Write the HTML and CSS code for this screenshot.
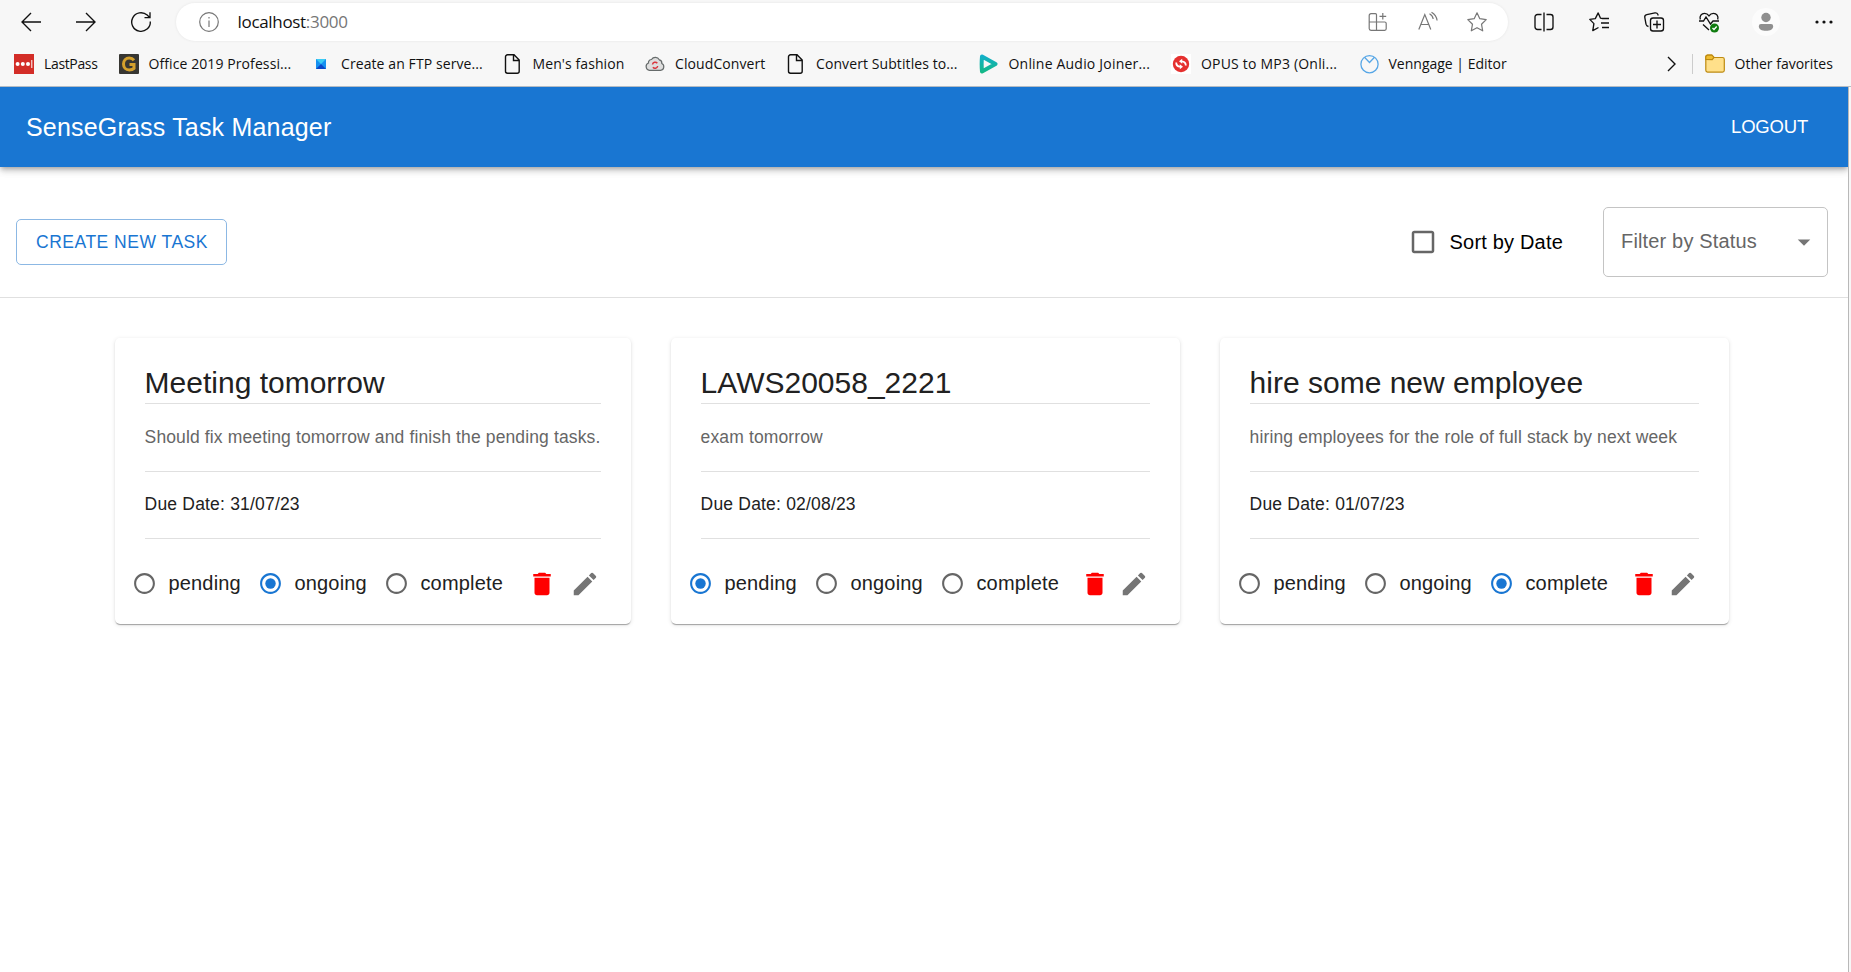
FILE: index.html
```html
<!DOCTYPE html>
<html lang="en">
<head>
<meta charset="utf-8">
<title>SenseGrass Task Manager</title>
<link rel="stylesheet" href="styles.css">
</head>
<body>
<svg class="defs" width="0" height="0">
  <defs>
    <symbol id="radio-off" viewBox="0 0 24 24"><path d="M12 2C6.48 2 2 6.48 2 12s4.48 10 10 10 10-4.480 10-10S17.520 2 12 2zm0 18c-4.420 0-8-3.580-8-8s3.580-8 8-8 8 3.580 8 8-3.580 8-8 8z"/></symbol>
    <symbol id="radio-on" viewBox="0 0 24 24"><path d="M12 2C6.480 2 2 6.480 2 12s4.480 10 10 10 10-4.480 10-10S17.520 2 12 2zm0 18c-4.420 0-8-3.580-8-8s3.580-8 8-8 8 3.580 8 8-3.580 8-8 8z"/><circle cx="12" cy="12" r="5"/></symbol>
    <symbol id="trash" viewBox="0 0 24 24"><path d="M6 19c0 1.100.9 2 2 2h8c1.100 0 2-.9 2-2V7H6v12zM19 4h-3.500l-1-1h-5l-1 1H5v2h14V4z"/></symbol>
    <symbol id="pencil" viewBox="0 0 24 24"><path d="M3 17.250V21h3.750L17.810 9.940l-3.750-3.750L3 17.250zM20.710 7.040c.39-.39.39-1.020 0-1.410l-2.340-2.340a.9959.9959 0 0 0-1.410 0l-1.830 1.830 3.750 3.750 1.830-1.830z"/></symbol>
    <symbol id="page" viewBox="0 0 20 20"><path d="M4.500 .8H11l5.200 5.200v11.200a2 2 0 0 1-2 2H4.500a2 2 0 0 1-2-2V2.800a2 2 0 0 1 2-2zM10.500 1v5.500h5.500" fill="none" stroke="#111" stroke-width="1.400"/></symbol>
  </defs>
</svg>

<header class="browser">
  <div class="toolbar">
    <svg class="tool back" viewBox="0 0 20 20"><path d="M20 10H1M10 1 1 10l9 9"/></svg>
    <svg class="tool forward" viewBox="0 0 20 20"><path d="M0 10h19M10 1l9 9-9 9"/></svg>
    <svg class="tool reload" viewBox="0 0 20 20"><path d="M19.300 9.500A9.300 9.300 0 1 1 16.200 3.100L18.600 5.400M19 .3v5.300h-5.500"/></svg>
    <div class="address">
      <svg class="tool muted" viewBox="0 0 20 20"><circle cx="10" cy="10" r="9.300"/><path d="M10 8.500V15M10 5v1.500"/></svg>
      <span class="url">localhost<span class="port">:3000</span></span>
      <svg class="tool muted apps" viewBox="0 0 20 20"><path d="M3 1.700h4.500a1 1 0 0 1 1 1v15.600H3a1.800 1.800 0 0 1-1.800-1.800V3.500A1.800 1.800 0 0 1 3 1.700zM1.200 10h15.500a1.500 1.500 0 0 1 1.500 1.500v5.300a1.500 1.500 0 0 1-1.500 1.500H8.500M14.800 1v6.500M11.500 4.300h6.700"/></svg>
      <svg class="tool muted read" viewBox="0 0 20 20"><path d="M.8 17.500 6.800 2.500l6 15M3 12.500h7.800M11.500 1.800c2 1 3.300 2.800 3.700 5.200M13.500.3c3 1.600 5 4.200 5.600 8.200"/></svg>
      <svg class="tool muted star" viewBox="0 0 20 20"><path stroke-linejoin="round" d="M10 .8l2.800 5.900 6.400.9-4.700 4.600 1.200 6.600L10 15.700l-5.700 3.100 1.200-6.600L.8 7.600l6.400-.9z"/></svg>
    </div>
    <svg class="tool split" viewBox="0 0 20 20"><path d="M7.500 2.500h-4a2.500 2.500 0 0 0-2.500 2.500v10a2.500 2.500 0 0 0 2.500 2.500h4M12.500 2.500h4a2.500 2.500 0 0 1 2.500 2.500v10a2.500 2.500 0 0 1-2.500 2.500h-4M10 .5v19"/></svg>
    <svg class="tool favs" viewBox="0 0 20 20"><path stroke-linejoin="round" d="M13.500 6.500l-2-.3L9.200.9 6.300 6.600l-5.500.8 4.100 4.200-1.100 7L9.500 15.500M13 6.500h7M12 11h8M13 15.500h7"/></svg>
    <svg class="tool collections" viewBox="0 0 20 20"><rect x="6.500" y="6" width="13" height="13" rx="2.500"/><path d="M13 8.500v8M9 12.500h8M4.500 14.500A3 3 0 0 1 2 12.200L.8 5.500a2.500 2.500 0 0 1 2-2.900L11 .9a2.500 2.500 0 0 1 3 2V3.500"/></svg>
    <svg class="tool health" viewBox="0 0 20 20"><path d="M1.300 7.500C.2 4 2.500 1.300 5.500 1.300c2 0 3.500 1 4.500 2.500 1-1.500 2.500-2.500 4.500-2.500 3 0 5.300 2.700 4.200 6.200M0 9h4.500L7 5l4.500 7L14 9h6M4 12.500l6 5.500"/><circle class="ok" cx="15.500" cy="16" r="4.500"/><path class="tick" d="M13.500 16l1.500 1.500 2.700-3"/></svg>
    <svg class="avatar" viewBox="0 0 28 28"><circle cx="14" cy="14" r="14" fill="#fcfcfc"/><circle cx="14" cy="9.500" r="4.700"/><path d="M9 16h10a2.200 2.200 0 0 1 2.200 2.200c0 3-3 4.600-7.200 4.600s-7.200-1.600-7.200-4.600A2.200 2.200 0 0 1 9 16z"/></svg>
    <svg class="tool more" viewBox="0 0 20 20"><g fill="#111" stroke="none"><circle cx="3" cy="10" r="1.600"/><circle cx="10" cy="10" r="1.600"/><circle cx="17" cy="10" r="1.600"/></g></svg>
  </div>
  <nav class="bookmarks">
    <a class="bm tight"><svg viewBox="0 0 20 20"><path fill="#d32d27" d="M0 0h20v20H0z"/><g fill="#fff"><circle cx="3.600" cy="10" r="2"/><circle cx="8.800" cy="10" r="2"/><circle cx="14" cy="10" r="2"/><path d="M17.300 6h1v8h-1z"/></g></svg><span>LastPass</span></a>
    <a class="bm"><svg viewBox="0 0 20 20"><rect width="20" height="20" rx="1" fill="#373632"/><path d="M15 6.200C13.800 4.700 12.200 4 10.300 4 6.800 4 4.500 6.500 4.500 10s2.300 6 5.800 6c2 0 3.700-.6 4.700-1.600V10.500h-4.500" fill="none" stroke="#d4a02c" stroke-width="3"/></svg><span>Office 2019 Professi...</span></a>
    <a class="bm"><svg viewBox="0 0 20 20"><path fill="#1690f0" d="M5 5h10v10H5z"/><path fill="#3ccbf4" d="M5 5h10l-5 5z"/><path fill="#0b46c8" d="M5 15h10l-5-5z"/></svg><span>Create an FTP serve...</span></a>
    <a class="bm"><svg><use href="#page"/></svg><span>Men's fashion</span></a>
    <a class="bm"><svg viewBox="0 0 20 20"><path d="M4.500 16.300a3.800 3.800 0 0 1-1-7.300 3 3 0 0 1 3-3.500 4.500 4.500 0 0 1 7.800.3 3.300 3.300 0 0 1 2.500 3.700 3.600 3.600 0 0 1-1.200 6.800z" fill="#dedede" stroke="#666b6b" stroke-width="1.200"/><path d="M7.500 10.500a2.700 2.700 0 0 1 4.800-1.300M12.700 12a2.700 2.700 0 0 1-4.800 1.300" fill="none" stroke="#d9363e" stroke-width="1.500"/></svg><span>CloudConvert</span></a>
    <a class="bm"><svg><use href="#page"/></svg><span>Convert Subtitles to...</span></a>
    <a class="bm loose"><svg viewBox="0 0 20 20"><defs><linearGradient id="play" gradientUnits="userSpaceOnUse" x1="0" y1="0" x2="0" y2="20"><stop offset="0" stop-color="#12aed0"/><stop offset="1" stop-color="#14b980"/></linearGradient></defs><path d="M3 2.500 16.500 10 3 17.500Q2.300 10 3 2.500z" fill="none" stroke="url(#play)" stroke-width="4" stroke-linejoin="round"/></svg><span>Online Audio Joiner...</span></a>
    <a class="bm loose"><svg viewBox="0 0 20 20"><path fill="#fff" d="M0 0h20v20H0z"/><circle cx="10" cy="10" r="8.200" fill="#e5302f"/><path d="M5.200 8.500c0 2.500 1.500 4 4 4.200M14.800 11.500c0-2.500-1.500-4-4-4.200" fill="none" stroke="#fff" stroke-width="1.800"/><path fill="#fff" d="M8.800 10.200l3.200 2.600-3.200 2.400zM11.200 9.800 8 7.200l3.200-2.400z"/></svg><span>OPUS to MP3 (Onli...</span></a>
    <a class="bm even"><svg viewBox="0 0 20 20"><g fill="none" stroke="#56a6e6" stroke-width="1.300"><circle cx="10.500" cy="10.200" r="8.600"/><path d="M5.500 3.300l5 5.200 5-5.200"/></g></svg><span>Venngage | Editor</span></a>
    <svg class="chevron" viewBox="0 0 9 16"><path d="M1 1l7 7-7 7"/></svg>
    <a class="bm even other"><svg viewBox="0 0 20 20"><path d="M.8 5.500V3A1.800 1.800 0 0 1 2.600 1.200h4L9 3.500h8.500a1.800 1.800 0 0 1 1.800 1.800v11a1.800 1.800 0 0 1-1.800 1.800h-15A1.800 1.800 0 0 1 .8 16.300z" fill="#ffe08a" stroke="#bd8a10" stroke-width="1.200"/><path d="M.8 5.400V3A1.800 1.800 0 0 1 2.600 1.200H7L9 3.400 7.200 5.600z" fill="#f0bd2f" stroke="#bd8a10" stroke-width="1.200"/></svg><span>Other favorites</span></a>
  </nav>
</header>

<div class="page">
  <div class="appbar"><h1>SenseGrass Task Manager</h1><button class="logout">LOGOUT</button></div>
  <div class="controls">
    <button class="create">CREATE NEW TASK</button>
    <label class="sort"><svg viewBox="0 0 24 24"><path d="M19 5v14H5V5h14m0-2H5c-1.100 0-2 .9-2 2v14c0 1.100.9 2 2 2h14c1.100 0 2-.9 2-2V5c0-1.100-.9-2-2-2z"/></svg><span>Sort by Date</span></label>
    <div class="filter"><span>Filter by Status</span><svg viewBox="0 0 24 24"><path d="M7 10l5 5 5-5z"/></svg></div>
  </div>
  <main class="cards">
    <article class="card">
      <h2>Meeting tomorrow</h2>
      <p class="desc">Should fix meeting tomorrow and finish the pending tasks.</p>
      <p class="due">Due Date: 31/07/23</p>
      <div class="actions">
        <div class="radios">
          <label><svg><use href="#radio-off"/></svg><span>pending</span></label>
          <label><svg class="on"><use href="#radio-on"/></svg><span>ongoing</span></label>
          <label><svg><use href="#radio-off"/></svg><span>complete</span></label>
        </div>
        <svg class="delete"><use href="#trash"/></svg>
        <svg class="edit"><use href="#pencil"/></svg>
      </div>
    </article>
    <article class="card">
      <h2>LAWS20058_2221</h2>
      <p class="desc">exam tomorrow</p>
      <p class="due">Due Date: 02/08/23</p>
      <div class="actions">
        <div class="radios">
          <label><svg class="on"><use href="#radio-on"/></svg><span>pending</span></label>
          <label><svg><use href="#radio-off"/></svg><span>ongoing</span></label>
          <label><svg><use href="#radio-off"/></svg><span>complete</span></label>
        </div>
        <svg class="delete"><use href="#trash"/></svg>
        <svg class="edit"><use href="#pencil"/></svg>
      </div>
    </article>
    <article class="card">
      <h2>hire some new employee</h2>
      <p class="desc">hiring employees for the role of full stack by next week</p>
      <p class="due">Due Date: 01/07/23</p>
      <div class="actions">
        <div class="radios">
          <label><svg><use href="#radio-off"/></svg><span>pending</span></label>
          <label><svg><use href="#radio-off"/></svg><span>ongoing</span></label>
          <label><svg class="on"><use href="#radio-on"/></svg><span>complete</span></label>
        </div>
        <svg class="delete"><use href="#trash"/></svg>
        <svg class="edit"><use href="#pencil"/></svg>
      </div>
    </article>
  </main>
</div>
</body>
</html>
```
FILE: styles.css
```css
* { box-sizing: border-box; }
body {
  margin: 0;
  height: 972px;
  overflow: hidden;
  display: flex;
  flex-direction: column;
  background: #f7f7f7;
  font-family: "Liberation Sans", Arial, sans-serif;
}
h1, h2, p { margin: 0; font-weight: 400; }
button { font-family: inherit; background: none; border: 0; padding: 0; }
svg { flex: none; display: block; }
.defs { position: absolute; }

/* Browser chrome */
.browser {
  height: 87px;
  flex: none;
  border-bottom: 1px solid #b4bcc4;
  font-family: "Open Sans", "Noto Sans", sans-serif;
  color: #111;
}
.toolbar { height: 44px; display: flex; align-items: center; padding: 0 0 1px 21px; }
.tool { width: 20px; height: 20px; fill: none; stroke: #111; stroke-width: 1.35; overflow: visible; }
.muted { stroke: #777; stroke-width: 1.2; }
.forward { margin-left: 35px; }
.reload { margin-left: 35px; }
.address {
  width: 1332px;
  height: 38px;
  margin-left: 25px;
  padding: 0 21px 0 23px;
  border-radius: 19px;
  background: #fff;
  box-shadow: 0 0 3px rgba(0, 0, 0, 0.08);
  display: flex;
  align-items: center;
}
.url { margin-left: 18.5px; padding-bottom: 1px; font-size: 17px; letter-spacing: -0.32px; }
.port { color: #767676; }
.apps { margin-left: auto; }
.read { margin-left: 30px; }
.star { margin-left: 29px; }
.split { margin-left: 25.5px; }
.favs, .collections, .health { margin-left: 35px; }
.ok { fill: #107c10; stroke: none; }
.tick { stroke: #fff; }
.avatar { width: 28px; height: 28px; margin-left: 33px; fill: #8f8f8f; }
.more { margin-left: 34px; }
.bookmarks {
  height: 40px;
  padding-left: 14px;
  display: grid;
  grid-template-columns: 104.5px 192.5px 191.5px 142.5px 141px 192.5px 192.5px 187.5px 308.5px 24.5px auto;
  align-items: center;
}
.bm { display: flex; align-items: center; gap: 10px; font-size: 14px; letter-spacing: 0.09px; white-space: nowrap; }
.bm.tight { letter-spacing: -0.35px; }
.bm.even { letter-spacing: 0; }
.bm.loose { letter-spacing: 0.2px; }
.bm span { padding-bottom: 2px; }
.bm svg { width: 20px; height: 20px; }
.chevron { width: 9px; height: 16px; fill: none; stroke: #111; stroke-width: 1.4; }
.other { height: 20px; border-left: 1px solid #ccc; padding-left: 12px; }

/* Application */
.page { flex: 1; width: 1849px; border-right: 1px solid #b8b8b8; background: #fff; }
.appbar {
  height: 80px;
  padding: 0 40px 0 26px;
  display: flex;
  align-items: center;
  justify-content: space-between;
  background: #1976d2;
  color: #fff;
  box-shadow: 0 2px 5px -1px rgba(0, 0, 0, 0.3), 0 5px 6px rgba(0, 0, 0, 0.1), 0 1px 12px rgba(0, 0, 0, 0.08);
  clip-path: inset(0 0 -20px 0);
}
.appbar h1 { font-size: 25px; letter-spacing: 0.19px; }
.logout { color: #fff; font-size: 18.5px; letter-spacing: -0.2px; }
.controls { height: 131px; display: flex; align-items: center; padding: 20px 20px 0 16px; border-bottom: 1px solid #e0e0e0; }
.create {
  width: 211px;
  height: 46px;
  padding-left: 1px;
  border: 1px solid #8cb8e4;
  border-radius: 5px;
  color: #1976d2;
  font-size: 17.5px;
  letter-spacing: 0.5px;
}
.sort { margin-left: auto; display: flex; align-items: center; gap: 12px; color: #000; font-size: 20px; letter-spacing: 0.19px; }
.sort svg { width: 30px; height: 30px; fill: #666; }
.filter {
  width: 225px;
  height: 70px;
  margin-left: 40px;
  padding: 0 8px 0 17px;
  border: 1px solid #c4c4c4;
  border-radius: 5px;
  display: flex;
  align-items: center;
  justify-content: space-between;
  color: #666;
  font-size: 20px;
  letter-spacing: 0.16px;
}
.filter span { padding-bottom: 2px; }
.filter svg { width: 30px; height: 30px; fill: #757575; }
.cards { display: flex; align-items: flex-start; gap: 40px; padding: 40px 0 0 114.6px; }
.card {
  width: 509px;
  height: 286px;
  padding: 25px 30px 0;
  border-radius: 5px;
  color: #212121;
  box-shadow: 0 2px 1px -1px rgba(0, 0, 0, 0.2), 0 1px 1px rgba(0, 0, 0, 0.14), 0 1px 4px rgba(0, 0, 0, 0.12);
}
.card:first-child { width: 516px; }
.card h2 { font-size: 30px; line-height: 40px; border-bottom: 1px solid #e0e0e0; }
.card p { border-bottom: 1px solid #e0e0e0; font-size: 17.5px; line-height: 25px; white-space: nowrap; }
.card .desc { padding: 21px 0; height: 68px; color: #666; letter-spacing: 0.13px; }
.card .due { padding: 20px 0; height: 67px; letter-spacing: 0.19px; }
.actions { height: 89px; margin: 0 0.5px 0 -12.5px; display: flex; align-items: center; justify-content: space-between; }
.radios { display: flex; width: 382px; }
.radios label { display: flex; width: 126px; align-items: center; gap: 11.3px; font-size: 20px; letter-spacing: 0.19px; }
.radios svg { width: 25px; height: 25px; fill: #666; }
.radios .on { fill: #1976d2; }
.delete { width: 30px; height: 30px; fill: #f00; }
.edit { width: 30px; height: 30px; fill: #757575; }
```
